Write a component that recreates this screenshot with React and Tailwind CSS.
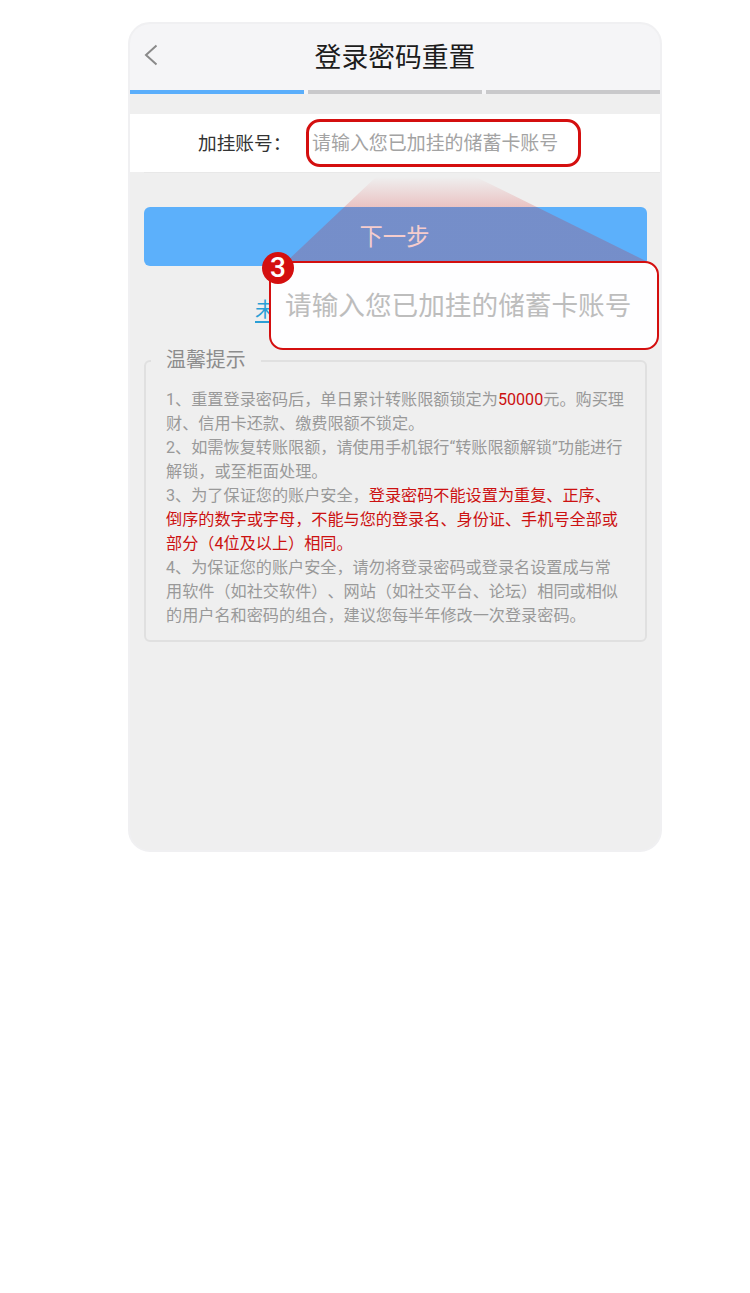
const CJK = { fontFamily: '"Roboto", "Noto Sans CJK SC", sans-serif' };

function Tips() {
  return (
    <div className="text-[16.15px] leading-[24px] text-[#999999] [text-spacing-trim:space-all] [font-kerning:none]">
      <p>1、重置登录密码后，单日累计转账限额锁定为<span className="text-[#cc1111]">50000</span>元。购买理财、信用卡还款、缴费限额不锁定。</p>
      <p>2、如需恢复转账限额，请使用手机银行“转账限额解锁”功能进行解锁，或至柜面处理。</p>
      <p>3、为了保证您的账户安全，<span className="text-[#cc1111]">登录密码不能设置为重复、正序、倒序的数字或字母，不能与您的登录名、身份证、手机号全部或部分（4位及以上）相同。</span></p>
      <p>4、为保证您的账户安全，请勿将登录密码或登录名设置成与常用软件（如社交软件）、网站（如社交平台、论坛）相同或相似的用户名和密码的组合，建议您每半年修改一次登录密码。</p>
    </div>
  );
}

export default function App() {
  return (
    <div className="min-h-[1293px] bg-white pl-[128px] pt-[22px]" style={CJK}>
      <div className="relative h-[830px] w-[534px] overflow-hidden rounded-[22px] border-2 border-[#f0f0f2] bg-[#efefef]">
        <header className="relative flex h-[66px] items-center justify-center bg-[#f5f5f7] pt-[2px]">
          <svg className="absolute left-[13px] top-[20px]" width="16" height="22" viewBox="0 0 16 22" fill="none">
            <path d="M13.5 1.5 3 11l10.5 9.5" stroke="#8a8a8a" strokeWidth="2" />
          </svg>
          <h1 className="text-[26.8px] font-normal leading-none text-[#1c1c1c]">登录密码重置</h1>
        </header>
        <div className="flex h-[4px] gap-[4px] bg-[#f5f5f7]">
          <div className="w-[174px] bg-[#5aaefb]" />
          <div className="w-[174px] bg-[#c9c9cb]" />
          <div className="w-[174px] bg-[#c9c9cb]" />
        </div>

        <div className="mt-[20px] flex h-[58px] items-center bg-white pl-[68px]">
          <span className="w-[108px] pt-[2px] text-[18.7px] text-[#333333]">加挂账号：</span>
          <div className="flex h-[48px] w-[275px] items-center rounded-[14px] border-[3px] border-[#d40f0f] pt-[2px] pl-[3px] text-[18.95px] whitespace-nowrap text-[#a3a3a3]">
            请输入您已加挂的储蓄卡账号
          </div>
        </div>
        <div className="ml-[14px] h-px bg-[#e8e8e8]" />

        <button className="mt-[34px] ml-[14px] flex h-[59px] w-[503px] items-center justify-center rounded-[6px] bg-[#5cb0fb] pt-[2px] pr-[2px] text-[23.3px] text-white">
          <span>下一步</span>
        </button>

        <div className="mt-[30px] ml-[125px] h-[28px] text-[20px] leading-[28px] text-[#2a9fd6] underline underline-offset-4">
          未
        </div>

        <fieldset className="mx-[14px] mt-[22px] w-[503px] rounded-[6px] border-2 border-[#e0e0e0] px-[20px] pt-[13px] pb-[12px]">
          <legend className="ml-[-15px] px-[15px] pt-[1px] text-[19.9px] leading-[28px] text-[#8c8c8c]">温馨提示</legend>
          <Tips />
        </fieldset>

        <svg className="absolute left-0 top-0" width="530" height="300" viewBox="0 0 530 300">
          <defs>
            <linearGradient id="beam" x1="0" y1="153" x2="0" y2="185" gradientUnits="userSpaceOnUse">
              <stop offset="0" stopColor="#d40f0f" stopOpacity="0" />
              <stop offset="1" stopColor="#d40f0f" stopOpacity="0.21" />
            </linearGradient>
          </defs>
          <polygon points="246,153 346,153 520,239 155,239" fill="url(#beam)" />
        </svg>

        <div className="absolute left-[139px] top-[237px] flex h-[89px] w-[390px] items-center rounded-[14px] border-2 border-[#d40f0f] bg-[#fefeff] pt-[2px] pl-[14px] text-[26.65px] whitespace-nowrap text-[#bdbdbd]">
          请输入您已加挂的储蓄卡账号
        </div>
        <div className="absolute left-[132px] top-[228px] flex h-[32px] w-[32px] items-center justify-center rounded-full bg-[#d40f0f] text-[28px] leading-none font-medium text-white">
          3
        </div>
      </div>
    </div>
  );
}
